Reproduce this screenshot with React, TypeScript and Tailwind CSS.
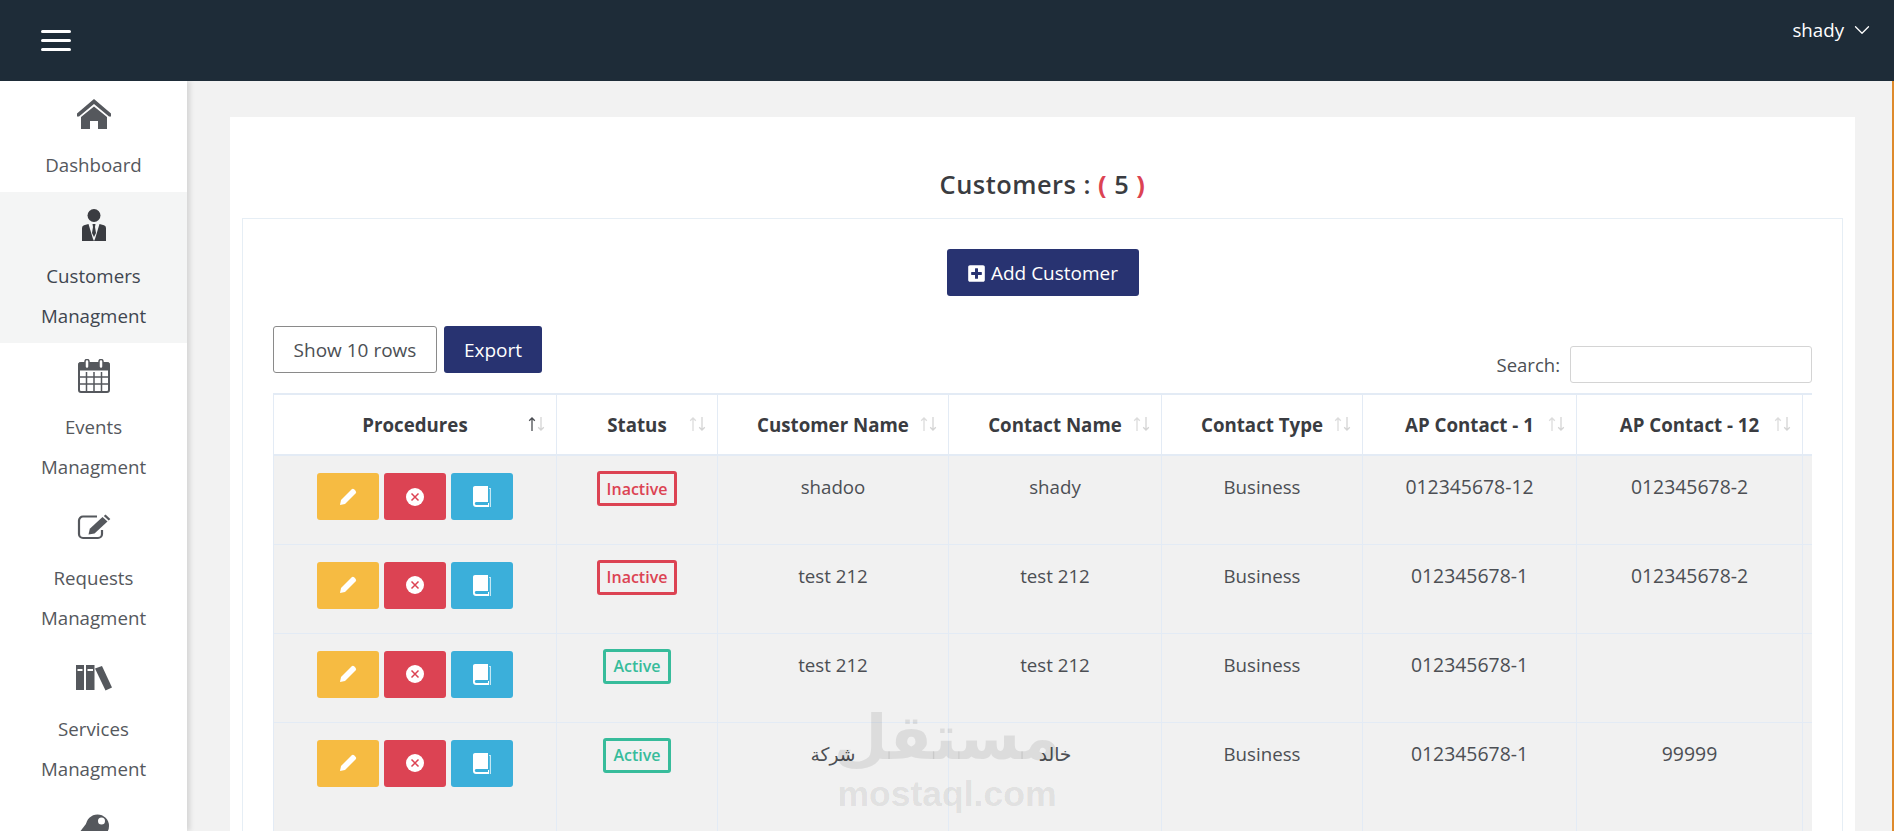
/* Customers admin page: top bar, icon sidebar and the customers table */
import { ChevronDown } from 'lucide-react'
import { FaPlusSquare } from 'react-icons/fa'

const HomeIcon = () => (
    <svg viewBox="0 0 34 30" className="w-[34px] h-[30px]" fill="#55585d">
        <path d="M17 0 34 14.500 34 17.500 32 17.500 17 5 2 17.500 0 17.500 0 14.500Z" />
        <path fillRule="evenodd" d="M17 7.500 30 18V30H21V22H13V30H4V18Z" />
    </svg>
)

const UserIcon = () => (
    <svg viewBox="0 0 26 32" className="w-[26px] h-[32px]" fill="#3a3c41">
        <circle cx="13" cy="6.500" r="6.500" />
        <path d="M1 32V19Q1 17 3 16.300L7.500 15 12 30 13 32Z" />
        <path d="M25 32V19Q25 17 23 16.300L18.500 15 14 30 13 32Z" />
        <path d="M11.500 15H14.500L14 18 15 24 13 28 11 24 12 18Z" />
    </svg>
)

const CalendarIcon = () => (
    <svg viewBox="0 0 32 34" className="w-[32px] h-[34px]" fill="none" stroke="#55585d">
        <rect x="1" y="4" width="30" height="29" rx="2" strokeWidth="2" />
        <path d="M1 4H31V11H1Z" fill="#55585d" strokeWidth="1" />
        <path d="M8.500 13V32M16 13V32M23.500 13V32M2 18H30M2 25H30" strokeWidth="1.500" />
        <rect x="7" y="0.500" width="4" height="9" rx="2" fill="#fff" strokeWidth="1.500" />
        <rect x="21" y="0.500" width="4" height="9" rx="2" fill="#fff" strokeWidth="1.500" />
    </svg>
)

const EditIcon = () => (
    <svg viewBox="0 0 34 26" className="w-[34px] h-[26px]" fill="#55585d">
        <path d="M20 2.500H6a4 4 0 0 0-4 4V20a4 4 0 0 0 4 4H21a4 4 0 0 0 4-4V16" fill="none" stroke="#55585d" strokeWidth="2.200" />
        <path d="M11.500 20.500 12.800 14.800 25.500 3 30.500 7.500 17.500 19.500Z" />
        <path d="M26.800 2 28.500 0.500 33.300 5 31.700 6.500Z" />
    </svg>
)

const BooksIcon = () => (
    <svg viewBox="0 0 36 26" className="w-[36px] h-[26px]" fill="#55585d">
        <path fillRule="evenodd" d="M0 0H8V25H0ZM1.500 4V6H6.500V4Z" />
        <path fillRule="evenodd" d="M10 0H18.500V25H10ZM11.500 4V6H17V4Z" />
        <path d="M19 3.500 26 1 36 22.500 29.500 25.500Z" />
    </svg>
)

const KeyIcon = () => (
    <svg viewBox="0 0 30 30" className="w-[30px] h-[30px]" fill="#55585d">
        <path fillRule="evenodd" d="M18.500 0.500a11.500 11.500 0 1 1 0 23 11.500 11.500 0 0 1 0-23ZM22.500 3.500a3.500 3.500 0 1 0 0 7 3.500 3.500 0 0 0 0-7Z" />
        <path d="M10 6 0 19V30H10L20 20Z" />
    </svg>
)

const PenIcon = () => (
    <svg viewBox="0 0 18 18" className="w-[18px] h-[18px]" fill="#fff">
        <path d="M1 17 2 12 12.500 1.500a2 2 0 0 1 2.800 0l1.200 1.200a2 2 0 0 1 0 2.800L6 16Z" />
    </svg>
)

const CancelIcon = () => (
    <svg viewBox="0 0 18 18" className="w-[18px] h-[18px]">
        <circle cx="9" cy="9" r="9" fill="#fff" />
        <path d="M5.500 5.500 12.500 12.500M12.500 5.500 5.500 12.500" stroke="#dc4353" strokeWidth="1.500" />
    </svg>
)

const BookIcon = () => (
    <svg viewBox="0 0 18 21" className="w-[18px] h-[21px]" fill="#fff">
        <path d="M2 0H15V16H3.500C2.500 16 1.800 16.700 1.800 17.500 1.800 18.300 2.500 19 3.500 19H15V17H16V21H3C1.300 21 0 19.700 0 18V2C0 .9 .9 0 2 0Z" />
        <path d="M16 2H18V21H16.800V3H16Z" opacity="0.7" />
    </svg>
)

const SortArrows = ({ active }: { active?: boolean }) => (
    <svg viewBox="0 0 17 14" className="absolute right-[11px] top-[22px] w-[17px] h-[14px]" fill="none" strokeWidth="1.300">
        <path d="M4 14V1M1.200 3.800 4 1l2.800 2.800" stroke={active ? '#4a4d52' : '#dcdcdc'} />
        <path d="M13 0V13M10.200 10.200 13 13l2.800-2.800" stroke="#d4d4d4" />
    </svg>
)

const navItems = [
    { id: 'dashboard', icon: <HomeIcon />, lines: ['Dashboard'] },
    { id: 'customers', icon: <UserIcon />, lines: ['Customers', 'Managment'], active: true },
    { id: 'events', icon: <CalendarIcon />, lines: ['Events', 'Managment'] },
    { id: 'requests', icon: <EditIcon />, lines: ['Requests', 'Managment'] },
    { id: 'services', icon: <BooksIcon />, lines: ['Services', 'Managment'] },
    { id: 'keys', icon: <KeyIcon />, lines: [] },
]

const columns = [
    { label: 'Procedures', width: 'w-[283px]', active: true },
    { label: 'Status', width: 'w-[161px]' },
    { label: 'Customer Name', width: 'w-[231px]' },
    { label: 'Contact Name', width: 'w-[213px]' },
    { label: 'Contact Type', width: 'w-[201px]' },
    { label: 'AP Contact - 1', width: 'w-[214px]' },
    { label: 'AP Contact - 12', width: 'w-[226px]' },
]

const rows = [
    { status: 'Inactive', customer: 'shadoo', contact: 'shady', ap1: '012345678-12', ap2: '012345678-2' },
    { status: 'Inactive', customer: 'test 212', contact: 'test 212', ap1: '012345678-1', ap2: '012345678-2' },
    { status: 'Active', customer: 'test 212', contact: 'test 212', ap1: '012345678-1', ap2: '' },
    { status: 'Active', customer: 'شركة', contact: 'خالد', ap1: '012345678-1', ap2: '99999' },
]

const cellClass = 'border-r border-t border-[#e3ebf5] pt-[17px] text-center align-top text-[18.7px] leading-[27px] text-[#4c4f54]'
const numberCellClass = 'border-r border-t border-[#e3ebf5] pt-[17px] text-center align-top text-[19.4px] leading-[27px] text-[#4c4f54]'

export default function App() {
    return (
        <div className="relative flex h-screen w-full flex-col overflow-hidden bg-[#f2f2f2] font-['Open_Sans','DejaVu_Sans',sans-serif]">
            <header className="z-20 flex h-[81px] shrink-0 items-start justify-between bg-[#1e2c38] pl-[41px] pr-[19px] text-white">
                <div className="mt-[30px] flex w-[30px] flex-col gap-[6px]">
                    <span className="h-[3px] rounded-full bg-white" />
                    <span className="h-[3px] rounded-full bg-white" />
                    <span className="h-[3px] rounded-full bg-white" />
                </div>
                <div className="mt-[16px] flex items-center gap-[5px] text-[18.7px] leading-[27px]">
                    shady
                    <ChevronDown className="h-[26px] w-[26px]" strokeWidth={1.2} />
                </div>
            </header>

            <div className="flex min-h-0 flex-1">
                <aside className="z-10 w-[187px] shrink-0 overflow-hidden bg-white shadow-[3px_0_5px_rgba(0,0,0,0.12)]">
                    {navItems.map((item) => (
                        <div
                            key={item.id}
                            className={`flex flex-col items-center pb-2 pt-2 text-[18.7px] leading-[39.5px] first:pb-[7.5px] ${item.active ? 'bg-[#f4f5f5] text-[#3f4650]' : 'text-[#55585d]'}`}
                        >
                            <div className="mb-[6px] flex h-[50px] items-center justify-center">{item.icon}</div>
                            {item.lines.map((line) => (
                                <span key={line}>{line}</span>
                            ))}
                        </div>
                    ))}
                </aside>

                <main className="min-w-0 flex-1 overflow-hidden border-r-2 border-[#de8a2c] pl-[43px] pr-[37px] pt-9">
                    <div className="bg-white px-3">
                        <h1 className="flex h-[101px] items-end justify-center pb-[16px] text-[25.4px] font-semibold leading-9 tracking-[0.5px] text-[#3a3c41]">
                            Customers :&nbsp;<span className="font-bold text-[#dc4353]">(</span>&nbsp;5&nbsp;<span className="font-bold text-[#dc4353]">)</span>
                        </h1>

                        <div className="border border-[#e6eef5] px-[30px] pt-[30px]">
                            <div className="flex justify-center">
                                <button className="flex h-[47px] w-[192px] items-center justify-center gap-[5px] rounded-[3px] bg-[#283371] pt-[2px] text-[19px] text-white">
                                    <FaPlusSquare className="h-[19px] w-[19px]" />
                                    Add Customer
                                </button>
                            </div>

                            <div className="mt-[30px] flex items-start justify-between">
                                <div className="flex gap-[7px]">
                                    <button className="h-[47px] w-[164px] rounded-[3px] border border-[#8a8a8a] pt-[2px] text-[19px] text-[#4c4f54]">
                                        Show 10 rows
                                    </button>
                                    <button className="h-[47px] w-[98px] rounded-[3px] bg-[#283371] pt-[2px] text-[19px] text-white">
                                        Export
                                    </button>
                                </div>
                                <label className="mt-5 flex items-center gap-[10px] text-[18.5px] text-[#4c4f54]">
                                    Search:
                                    <input className="h-[37px] w-[242px] rounded-[3px] border border-[#d4d4d4] bg-white" />
                                </label>
                            </div>

                            <div className="mt-[10px] overflow-hidden">
                                <table className="w-[1760px] table-fixed border-collapse">
                                    <colgroup>
                                        {columns.map((col) => (
                                            <col key={col.label} className={col.width} />
                                        ))}
                                        <col className="w-[231px]" />
                                    </colgroup>
                                    <thead>
                                        <tr className="h-[61px] border-y-2 border-[#e3ebf5]">
                                            {columns.map((col, i) => (
                                                <th
                                                    key={col.label}
                                                    className={`relative border-r border-[#e3ebf5] pt-[2px] text-center text-[18.7px] font-bold text-[#3a3c41] ${i === 0 ? 'border-l' : ''}`}
                                                >
                                                    {col.label}
                                                    <SortArrows active={col.active} />
                                                </th>
                                            ))}
                                            <th />
                                        </tr>
                                    </thead>
                                    <tbody>
                                        {rows.map((row, i) => (
                                            <tr key={i} className={`bg-[#f1f1f1] ${i === 3 ? 'h-[140px]' : 'h-[89px]'}`}>
                                                <td className="border-l border-r border-t border-[#e3ebf5] pt-[17px] align-top">
                                                    <div className="flex justify-center gap-[5px]">
                                                        <span className="flex h-[47px] w-[62px] items-center justify-center rounded-[3px] bg-[#f6bb42]">
                                                            <PenIcon />
                                                        </span>
                                                        <span className="flex h-[47px] w-[62px] items-center justify-center rounded-[3px] bg-[#dc4353]">
                                                            <CancelIcon />
                                                        </span>
                                                        <span className="flex h-[47px] w-[62px] items-center justify-center rounded-[3px] bg-[#3bafda]">
                                                            <BookIcon />
                                                        </span>
                                                    </div>
                                                </td>
                                                <td className="border-r border-t border-[#e3ebf5] pt-[15px] text-center align-top">
                                                    <span
                                                        className={`inline-flex h-[35px] items-center justify-center rounded-[3px] border-[3px] px-[7px] text-[16px] font-semibold ${row.status === 'Active' ? 'border-[#37bc9b] text-[#37bc9b]' : 'border-[#dc4353] text-[#dc4353]'}`}
                                                    >
                                                        {row.status}
                                                    </span>
                                                </td>
                                                <td className={cellClass}>{row.customer}</td>
                                                <td className={cellClass}>{row.contact}</td>
                                                <td className={cellClass}>Business</td>
                                                <td className={numberCellClass}>{row.ap1}</td>
                                                <td className={numberCellClass}>{row.ap2}</td>
                                                <td className="border-t border-[#e3ebf5]" />
                                            </tr>
                                        ))}
                                    </tbody>
                                </table>
                            </div>
                        </div>
                    </div>
                </main>
            </div>

            {/* Watermark over the page */}
            <div className="pointer-events-none absolute left-[838px] top-[700px] z-30 flex w-[218px] flex-col items-center text-black/[0.085]">
                <span dir="rtl" className="font-['DejaVu_Sans'] text-[62px] font-bold leading-[75px]">مستقل</span>
                <span className="font-['Liberation_Sans'] text-[35.5px] font-bold leading-[38px]">mostaql.com</span>
            </div>
        </div>
    )
}
